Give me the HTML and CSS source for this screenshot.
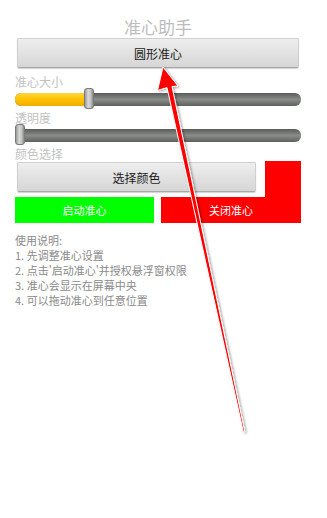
FILE: index.html
```html
<!DOCTYPE html>
<html lang="zh">
<head>
<meta charset="utf-8">
<title>准心助手</title>
<link rel="stylesheet" href="styles.css">
</head>
<body>
<div class="page">
  <h1 class="title">准心助手</h1>
  <div class="btn btn-main">圆形准心</div>

  <div class="label label-first">准心大小</div>
  <div class="slider">
    <div class="track">
      <div class="fill" style="width: 72px"></div>
    </div>
    <div class="thumb" style="left: 69px"></div>
  </div>

  <div class="label">透明度</div>
  <div class="slider">
    <div class="track"></div>
    <div class="thumb" style="left: 0px"></div>
  </div>

  <div class="label label-color">颜色选择</div>
  <div class="color-row">
    <div class="btn btn-select">选择颜色</div>
    <div class="swatch"></div>
  </div>
  <div class="action-row">
    <div class="action start">启动准心</div>
    <div class="action stop">关闭准心</div>
  </div>

  <div class="help">
    <p>使用说明:</p>
    <p>1. 先调整准心设置</p>
    <p>2. 点击'启动准心'并授权悬浮窗权限</p>
    <p>3. 准心会显示在屏幕中央</p>
    <p>4. 可以拖动准心到任意位置</p>
  </div>
</div>

<svg class="arrow" width="327" height="518" viewBox="0 0 327 518" xmlns="http://www.w3.org/2000/svg">
  <defs>
    <filter id="sh" x="-20%" y="-5%" width="140%" height="110%">
      <feDropShadow dx="1.5" dy="1" stdDeviation="1" flood-color="#000" flood-opacity="0.35"/>
    </filter>
  </defs>
  <polygon points="163,67 178,86 172,86.5 244.8,431.8 243.4,432.2 167,87.6 157.5,90.5"
           fill="#ff0000" stroke="#ffffff" stroke-width="1" stroke-linejoin="round" filter="url(#sh)"/>
</svg>
</body>
</html>
```

FILE: styles.css
```css
html, body {
  margin: 0;
  padding: 0;
  background: #ffffff;
}

body {
  font-family: "Noto Sans CJK SC", "Noto Sans", sans-serif;
  width: 327px;
  height: 518px;
  overflow: hidden;
  position: relative;
}

.page {
  padding: 16px 26px 0 15px;
  display: flex;
  flex-direction: column;
}

.title {
  margin: 0;
  height: 22px;
  line-height: 22px;
  font-size: 17px;
  font-weight: normal;
  color: #bdbdbd;
  text-align: center;
}

.btn {
  box-sizing: border-box;
  height: 30px;
  display: flex;
  align-items: center;
  justify-content: center;
  font-size: 12px;
  color: #1a1a1a;
  background: linear-gradient(#eeeeee, #d6d6d6);
  border: 1px solid #cfcfcf;
  border-bottom-color: #a8a8a8;
  border-radius: 2px;
  box-shadow: 0 1px 1px rgba(0, 0, 0, 0.18);
}

.btn-main {
  margin: 0 2px;
}

.label {
  height: 14px;
  line-height: 14px;
  font-size: 12px;
  color: #c2c2c2;
  margin-top: 2px;
}

.label-first {
  margin-top: 7px;
}

.label-color {
  margin-top: 2px;
}

.slider {
  position: relative;
  height: 20px;
  display: flex;
  align-items: center;
}

.track {
  position: relative;
  flex: 1;
  height: 13px;
  border-radius: 6px;
  overflow: hidden;
  background: linear-gradient(#5a5c5a, #8a8c8a 50%, #5e605e);
}

.fill {
  height: 100%;
  background: linear-gradient(#ffd640, #ffc400 45%, #f2ab00);
}

.thumb {
  position: absolute;
  top: -1px;
  width: 10px;
  height: 21px;
  box-sizing: border-box;
  border-radius: 3px;
  border: 1px solid #7a7a7a;
  background: linear-gradient(90deg, #9a9a9a, #d8d8d8 40%, #c4c4c4 70%, #8a8a8a);
}

.color-row {
  display: flex;
  align-items: flex-start;
  gap: 9px;
  height: 36px;
}

.btn-select {
  flex: 1;
  margin: 1px 0 0 2px;
}

.swatch {
  width: 36px;
  height: 36px;
  background: #ff0000;
}

.action-row {
  display: flex;
  gap: 7px;
  height: 26px;
}

.action {
  flex: 1;
  display: flex;
  align-items: center;
  justify-content: center;
  font-size: 11px;
  color: #ffffff;
}

.start {
  flex: 0 0 139px;
  background: #00ff00;
}

.stop {
  background: #ff0000;
}

.help {
  margin-top: 10px;
}

.help p {
  margin: 0;
  height: 15px;
  line-height: 15px;
  font-size: 11px;
  color: #8a8a8a;
}

.arrow {
  position: absolute;
  left: 0;
  top: 0;
  pointer-events: none;
}
```
